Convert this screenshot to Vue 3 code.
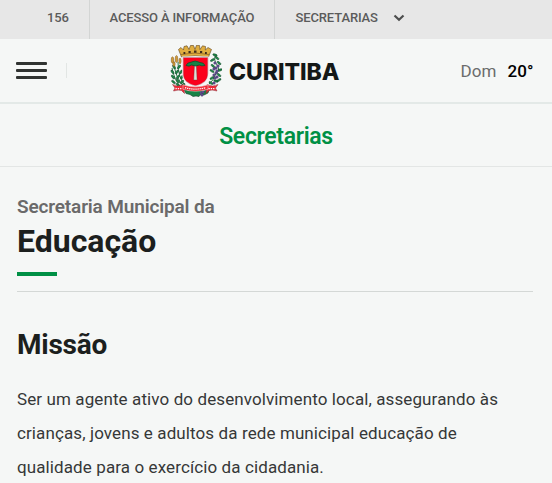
<script setup>
const lines = [
  'Ser um agente ativo do desenvolvimento local, assegurando às',
  'crianças, jovens e adultos da rede municipal educação de',
  'qualidade para o exercício da cidadania.',
]
const leaves = [
  [4, 22, 60], [9, 22, -50], [2.5, 27, 55], [7, 27, -55], [11, 27, -60], [3, 32, 50], [8, 32, -50], [12, 32, -60],
  [3.5, 37, 40], [8, 36, 50], [12, 37, -50], [8, 40, 40], [13, 40, -40],
  [45, 10, 20], [42.5, 15, -30], [47, 13, 40], [49, 18, 40], [43, 21, 40], [50, 25, -20], [42, 26, 30],
  [49, 30, 40], [42, 33, -30], [46, 36, 20], [41, 38, 30], [49, 35, -30],
]
const grapes = [[45, 18], [48, 21], [46, 23], [44, 24], [46, 28], [44, 30], [47, 32], [45, 33], [44, 38], [47, 26], [31, 48], [33, 47], [32, 50]]
</script>

<template>
  <div class="page">
    <nav class="top">
      <a class="first">156</a>
      <a class="info">ACESSO À INFORMAÇÃO</a>
      <a class="sec">SECRETARIAS
        <svg width="12" height="8" viewBox="0 0 12 8"><path d="M1.500 1.500 6 5.800l4.500-4.300" fill="none" stroke="#4d4e4e" stroke-width="2.200" /></svg>
      </a>
    </nav>
    <header class="header">
      <div class="left">
        <div class="burger"><i></i><i></i><i></i></div>
        <span class="sep"></span>
      </div>
      <div class="brand">
        <svg class="crest" width="52" height="52" viewBox="0 0 52 52">
          <g fill="none" stroke="#176b35" stroke-width=".9">
            <path d="M4 17q1 17 11 25M8 17q0 16 7 23M2 23q3 14 9 19" />
            <path d="M46 9q-3 6 1 11t-2 10q-1 5-6 9" />
          </g>
          <ellipse v-for="(l, i) in leaves" :key="i" rx="2.300" ry="1" :transform="`translate(${l[0]} ${l[1]}) rotate(${l[2]})`" fill="#1b8c48" stroke="#123d26" stroke-width=".5" />
          <g fill="#d09a38" stroke="#6b4a20" stroke-width=".4">
            <ellipse cx="2.500" cy="15" rx="1.300" ry="3.200" /><ellipse cx="6.500" cy="14" rx="1.300" ry="3.500" /><ellipse cx="10" cy="16" rx="1.200" ry="3" /><ellipse cx="4" cy="19" rx="1.200" ry="2.500" />
          </g>
          <path d="m13 42 5 4 8-1 8 1 6-4-2 6-4 2-3-1-2 2.500-3-.5-3 .5-3-2-4-1z" fill="#168345" stroke="#173d28" stroke-width=".6" />
          <circle v-for="(g, i) in grapes" :key="i" :cx="g[0]" :cy="g[1]" r="1.300" fill="#69549a" stroke="#3d315a" stroke-width=".4" />
          <path d="M11.500 12 8.500 4.500l2.500-2 2.500 2.500L14 1.500l3-.7 2 3.700L20.500.5h3l1.500 4L26.500.2l3 .3.500 4L32.500.8l3 .7-.2 3.500L38 2.500l3.500 2L38.500 12q-13-2.500-27 0z" fill="#e0ae40" stroke="#5a401c" stroke-width=".6" />
          <path d="M11 9.500q14-3 28 0" fill="none" stroke="#80571b" stroke-width=".7" />
          <g fill="#3d2d1b"><path d="M13.500 7h1.800v2h-1.800zM18.500 6h2.200v2h-2.200zM24 5.500h2.500v2.200H24zM30 6h2.200v2H30zM35 7h1.800v2H35z" /></g>
          <path d="M12.800 12.200h25.400v16.300q0 10-12.700 12.500-12.700-2.500-12.700-12.500z" fill="#fb001c" stroke="#f5f7f6" stroke-width="1.200" />
          <path d="M13.300 12.500h24.400v16q0 9.800-12.200 12.200-12.200-2.400-12.200-12.200z" fill="none" stroke="#a02034" stroke-width=".4" />
          <path d="M24.500 19h1.800l.8 16h-3.400z" fill="#dce0d8" stroke="#6c292c" stroke-width=".4" />
          <path d="M16 20.500q1-3 5-3.300 4-2.500 9 .3 4 0 5 3-3.500 1-5.500-.5-4 2-8 0-2 2-5.500.5z" fill="#168345" stroke="#184027" stroke-width=".7" />
          <path d="M2.500 39.500q5 3 11 0l1 9-3-3q-3-1-8 .5l1.500-3zM48 39.500q-5 3-11 0l-1 9 3-3q3-1 8 .5l-1.500-3z" fill="#f02a38" stroke="#8c2932" stroke-width=".5" />
          <path d="M13 39.800q12.500 4 25 0v4.500q-12.500 4-25 0z" fill="#f02a38" stroke="#f6dfda" stroke-width=".5" />
          <g fill="none" stroke="#fff" stroke-width="1.300"><path d="M15 42.600q10.500 3 21 0" stroke-dasharray="1.300 .8" /><path d="m5.500 43.500 7 .2M38.500 43.700l7-.2" stroke-dasharray="1.300 1" /></g>
        </svg>
        <span class="name">CURITIBA</span>
      </div>
      <div class="weather"><span>Dom</span><b>20°</b></div>
    </header>
    <div class="subhead">Secretarias</div>
    <main>
      <p class="over">Secretaria Municipal da</p>
      <h1>Educação</h1>
      <div class="accent"></div>
      <hr />
      <h2>Missão</h2>
      <div class="body"><div v-for="l in lines" :key="l">{{ l }}</div></div>
    </main>
  </div>
</template>

<style>
body { background: #f5f7f6; overflow: hidden; }
</style>
<style scoped>
.page { width: 552px; height: 483px; overflow: hidden; background: #f5f7f6; font-family: Roboto, sans-serif; color: #1c1f1e; }
.top { height: 39px; display: flex; background: #e7e7e7; font-size: 13px; letter-spacing: -.13px; font-weight: 500; line-height: 35px; color: #5b5b5b; white-space: nowrap; }
.top a { box-sizing: border-box; }
.first { width: 90px; padding-left: 47px; border-right: 1px solid #d3d5d4; }
.info { width: 185px; padding-left: 19.5px; border-right: 1px solid #d3d5d4; }
.sec { width: 129.5px; padding-left: 20.5px; display: flex; align-items: center; justify-content: space-between; height: 35px; }
.header { box-sizing: border-box; height: 65px; border-bottom: 2px solid #e3e9e7; display: grid; grid-template-columns: 170px 1fr 91.5px; }
.left { display: flex; align-items: flex-start; padding: 23px 0 0 16px; }
.burger { width: 31px; display: grid; gap: 4px; }
.burger i { height: 3px; border-radius: 1px; background: #303331; }
.sep { width: 1px; height: 15px; margin: 1px 0 0 19px; background: #e2e6e4; }
.brand { display: flex; align-items: flex-start; padding-top: 6px; }
.crest { flex: none; }
.name { font: 800 23px/28px Inter, sans-serif; letter-spacing: -.05px; margin: 13px 0 0 7px; color: #141817; }
.weather { display: flex; gap: 12px; font-size: 17px; line-height: 64px; color: #6b6c6c; }
.weather span { letter-spacing: .1px; }
.weather b { font-weight: 500; color: #000; margin-left: -1px; }
.subhead { box-sizing: border-box; height: 63px; border-bottom: 1px solid #e3e6e5; text-align: center; line-height: 65px; font-size: 23px; letter-spacing: -.33px; font-weight: 600; color: #009045; }
main { padding: 28px 19px 0 17px; }
.over { margin: 0; font-size: 19px; letter-spacing: -.15px; line-height: 24px; font-weight: 600; color: #6a6a6a; }
h1 { margin: 2px 0 0; font-size: 32px; line-height: 40px; font-weight: 700; }
.accent { width: 40px; height: 4px; margin-top: 11px; background: #009045; }
hr { height: 1px; margin: 15px 0 0; border: 0; background: #d4d8d6; }
h2 { margin: 35px 0 0; font-size: 28px; letter-spacing: -.25px; line-height: 36px; font-weight: 700; }
.body { margin-top: 19px; font-size: 17px; letter-spacing: .105px; line-height: 34px; color: #363838; white-space: nowrap; }
</style>
